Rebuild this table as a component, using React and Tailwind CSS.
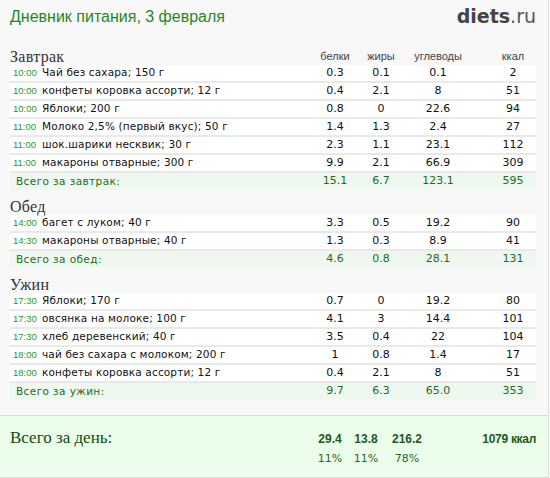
import React from 'react';

const meals = [
  {
    title: 'Завтрак',
    totalLabel: 'Всего за завтрак:',
    total: ['15.1', '6.7', '123.1', '595'],
    rows: [
      ['10:00', 'Чай без сахара; 150 г', '0.3', '0.1', '0.1', '2'],
      ['10:00', 'конфеты коровка ассорти; 12 г', '0.4', '2.1', '8', '51'],
      ['10:00', 'Яблоки; 200 г', '0.8', '0', '22.6', '94'],
      ['11:00', 'Молоко 2,5% (первый вкус); 50 г', '1.4', '1.3', '2.4', '27'],
      ['11:00', 'шок.шарики несквик; 30 г', '2.3', '1.1', '23.1', '112'],
      ['11:00', 'макароны отварные; 300 г', '9.9', '2.1', '66.9', '309'],
    ],
  },
  {
    title: 'Обед',
    totalLabel: 'Всего за обед:',
    total: ['4.6', '0.8', '28.1', '131'],
    rows: [
      ['14:00', 'багет с луком; 40 г', '3.3', '0.5', '19.2', '90'],
      ['14:30', 'макароны отварные; 40 г', '1.3', '0.3', '8.9', '41'],
    ],
  },
  {
    title: 'Ужин',
    totalLabel: 'Всего за ужин:',
    total: ['9.7', '6.3', '65.0', '353'],
    rows: [
      ['17:30', 'Яблоки; 170 г', '0.7', '0', '19.2', '80'],
      ['17:30', 'овсянка на молоке; 100 г', '4.1', '3', '14.4', '101'],
      ['17:30', 'хлеб деревенский; 40 г', '3.5', '0.4', '22', '104'],
      ['18:00', 'чай без сахара с молоком; 200 г', '1', '0.8', '1.4', '17'],
      ['18:00', 'конфеты коровка ассорти; 12 г', '0.4', '2.1', '8', '51'],
    ],
  },
];

const Cols = ({ values }) => (
  <>
    <div className="w-[46px] text-center">{values[0]}</div>
    <div className="w-[46px] text-center">{values[1]}</div>
    <div className="w-[68px] text-center">{values[2]}</div>
    <div className="w-[64px] pl-[18px] text-center">{values[3]}</div>
  </>
);

const Meal = ({ meal, first }) => (
  <div className={first ? 'mt-[21px]' : 'mt-[8px]'}>
    <div className="flex h-[17px] items-center">
      <div className="flex-1 font-['Liberation_Serif',serif] text-[16px] tracking-[0.3px] text-[#333]">
        {meal.title}
      </div>
      {first && (
        <div className="flex font-['Liberation_Sans',sans-serif] text-[11px] text-[#444]">
          <Cols values={['белки', 'жиры', 'углеводы', 'ккал']} />
        </div>
      )}
    </div>
    {meal.rows.map((r, i) => (
      <div
        key={i}
        className="flex h-[18px] items-center border-b-2 border-[#e9e9e9] bg-white font-['DejaVu_Sans',sans-serif] text-[11px] text-[#111]"
      >
        <div className="flex flex-1 items-center pl-[3px]">
          <span className="w-[29px] font-['Liberation_Sans',sans-serif] text-[9.5px] text-[#1f9a1f]">{r[0]}</span>
          <span className="text-[10.5px] tracking-[0.15px]">{r[1]}</span>
        </div>
        <Cols values={r.slice(2)} />
      </div>
    ))}
    <div className="flex h-[17px] items-center bg-[#eef8ee] font-['DejaVu_Sans',sans-serif] text-[11px] text-[#1f6b1f]">
      <div className="flex-1 pl-[6px] text-[10.5px] tracking-[0.4px]">{meal.totalLabel}</div>
      <Cols values={meal.total} />
    </div>
  </div>
);

export default function App() {
  return (
    <div className="flex h-[478px] w-[549px] flex-col border-r border-[#dcdcdc] bg-[#f8f8f8]">
      <div className="pl-[10px] pr-[12px]">
        <div className="flex h-[27px] items-end justify-between">
          <div className="font-['Liberation_Sans',sans-serif] text-[16px] leading-[20px] text-[#1e8a1e]">
            Дневник питания, 3 февраля
          </div>
          <div className="font-['DejaVu_Sans',sans-serif] text-[19px] leading-[22px] text-[#444]">
            <span className="font-bold">diets</span>
            <span className="text-[#555]">.ru</span>
          </div>
        </div>
        {meals.map((m, i) => (
          <Meal key={m.title} meal={m} first={i === 0} />
        ))}
      </div>
      <div className="mt-auto flex h-[63px] border-y border-[#dcdcdc] bg-[#ebfdeb] pl-[10px] pr-[12px]">
        <div className="flex-1 pt-[12px] font-['Liberation_Serif',serif] text-[17px] leading-[20px] text-[#0d4d0d]">
          Всего за день:
        </div>
        <div className="flex flex-col">
          <div className="mt-[15px] flex h-[16px] items-center font-['Liberation_Sans',sans-serif] text-[12px] font-bold text-[#1d5a1d]">
            <div className="w-[36px] text-center">29.4</div>
            <div className="w-[36px] text-center">13.8</div>
            <div className="w-[46px] text-center">216.2</div>
            <div className="w-[106px] text-right tracking-[-0.3px]">1079 ккал</div>
          </div>
          <div className="mt-[4px] flex h-[16px] items-center font-['DejaVu_Sans',sans-serif] text-[11px] text-[#236b23]">
            <div className="w-[36px] text-center">11%</div>
            <div className="w-[36px] text-center">11%</div>
            <div className="w-[46px] text-center">78%</div>
            <div className="w-[106px]" />
          </div>
        </div>
      </div>
    </div>
  );
}
